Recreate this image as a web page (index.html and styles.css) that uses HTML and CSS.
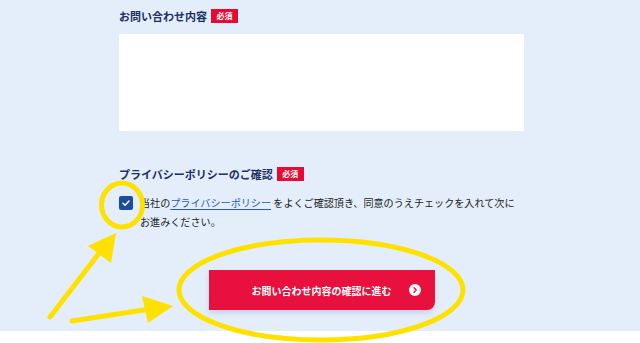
FILE: index.html
```html
<!DOCTYPE html>
<html lang="ja">
<head>
<meta charset="utf-8">
<link rel="stylesheet" href="styles.css">
</head>
<body>
<div class="page">
  <form class="form">
    <div class="field">
      <div class="label">お問い合わせ内容<span class="req">必須</span></div>
      <div class="textarea"></div>
    </div>
    <div class="field privacy">
      <div class="label">プライバシーポリシーのご確認<span class="req">必須</span></div>
      <div class="agree">
        <span class="check"><svg width="14" height="14" viewBox="0 0 14 14"><path d="M4 7.2 L6.1 9.2 L10 5" fill="none" stroke="#fff" stroke-width="1.5" stroke-linecap="round" stroke-linejoin="round"/></svg></span>
        <p class="agree-text">当社の<a class="link">プライバシーポリシー</a> をよくご確認頂き、同意のうえチェックを入れて次にお進みください。</p>
      </div>
    </div>
    <div class="actions">
      <button type="button" class="submit">お問い合わせ内容の確認に進む<span class="arrow"><svg width="12" height="12" viewBox="0 0 12 12"><circle cx="6" cy="6" r="6" fill="#fff"/><path d="M5 3.8 L7.2 6 L5 8.2" fill="none" stroke="#e8103c" stroke-width="1.5" stroke-linecap="round" stroke-linejoin="round"/></svg></span></button>
    </div>
  </form>
  <div class="footer"></div>
  <svg class="marks" width="640" height="343" viewBox="0 0 640 343">
    <g fill="none" stroke="#ffe100" stroke-width="5" stroke-linecap="round">
      <ellipse cx="122" cy="205" rx="20.5" ry="22"/>
      <ellipse cx="321" cy="290" rx="142" ry="50"/>
      <line x1="50" y1="317" x2="100" y2="252"/>
      <line x1="72" y1="321" x2="150" y2="309"/>
    </g>
    <g fill="#ffe100">
      <polygon points="88,246 116,233 111,263"/>
      <polygon points="142,296 173,306 148,323"/>
    </g>
  </svg>
</div>
</body>
</html>
```
FILE: styles.css
```css
* { box-sizing: border-box; }
html, body { margin: 0; padding: 0; }
body {
  font-family: "Noto Sans CJK JP", "Noto Sans", sans-serif;
  background: #fff;
  width: 640px;
  height: 343px;
  overflow: hidden;
}
.page {
  position: relative;
  width: 640px;
  height: 343px;
}
.form {
  background: #e3eefa;
  height: 331px;
  padding: 9px 0 0 119px;
}
.field { width: 405px; }
.label {
  display: flex;
  align-items: center;
  height: 14px;
  font-size: 11px;
  font-weight: 700;
  color: #1c2f66;
  line-height: 14px;
}
.req {
  display: inline-flex;
  align-items: center;
  justify-content: center;
  margin-left: 4px;
  width: 27px;
  height: 14px;
  background: #e60b32;
  color: #fff;
  font-size: 8px;
  font-weight: 700;
}
.textarea {
  margin-top: 11px;
  width: 405px;
  height: 97px;
  background: #fff;
}
.privacy { margin-top: 36px; }
.agree {
  display: flex;
  align-items: flex-start;
  margin-top: 14px;
}
.check {
  flex: 0 0 14px;
  width: 14px;
  height: 14px;
  margin-top: 1px;
  background: #1d4c9d;
  border-radius: 2px;
  display: flex;
}
.agree-text {
  margin: -2px 0 0 7px;
  font-size: 10.1px;
  line-height: 19px;
  color: #222;
}
.link {
  color: #2b5cb8;
  text-decoration: underline;
  text-underline-offset: 2px;
}
.actions {
  width: 405px;
  display: flex;
  justify-content: center;
  margin-top: 39px;
}
.submit {
  position: relative;
  width: 226px;
  height: 40px;
  border: 0;
  background: #e8103c;
  color: #fff;
  font-family: inherit;
  font-size: 10px;
  font-weight: 700;
  border-radius: 0 0 8px 0;
  box-shadow: 0 3px 5px rgba(120,140,180,0.25);
  display: flex;
  align-items: center;
  justify-content: center;
  padding: 0;
}
.arrow {
  position: absolute;
  right: 14px;
  top: 14px;
  width: 12px;
  height: 12px;
  display: flex;
}
.footer { height: 12px; background: #fff; }
.marks {
  position: absolute;
  left: 0;
  top: 0;
  pointer-events: none;
}
```
